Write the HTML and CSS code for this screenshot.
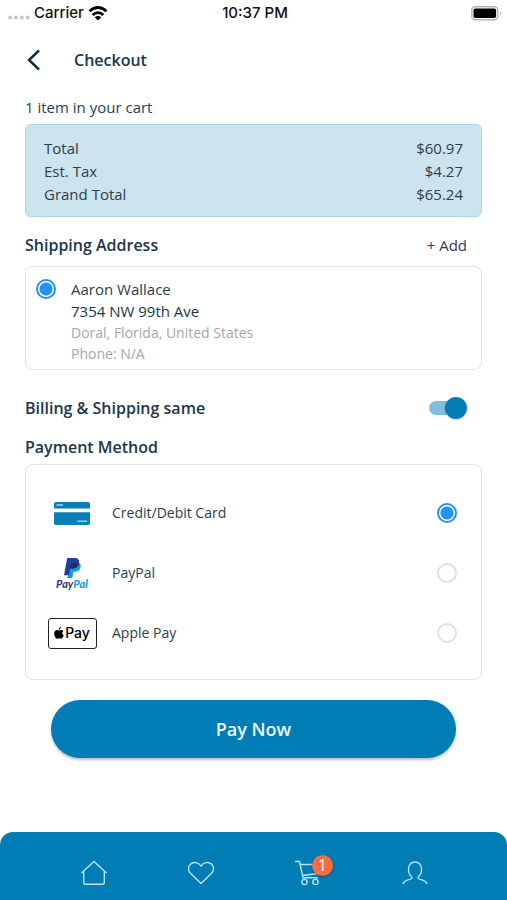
FILE: index.html
```html
<!DOCTYPE html>
<html lang="en">
<head>
<meta charset="utf-8">
<meta name="viewport" content="width=device-width, initial-scale=1">
<title>Checkout</title>
<link rel="stylesheet" href="styles.css">
</head>
<body>
<div class="status">
  <div class="carrier">
    <svg width="22" height="5" viewBox="0 0 22 5" fill="#c4c4c4"><circle cx="2" cy="2.5" r="1.9"/><circle cx="7.9" cy="2.5" r="1.9"/><circle cx="13.8" cy="2.5" r="1.9"/><circle cx="19.7" cy="2.5" r="1.9"/></svg>
    <span>Carrier</span>
    <svg width="20" height="15" viewBox="0 0 20 15" fill="none" stroke="#000" stroke-width="2.700"><path d="M1.500 5.300Q10-2.300 18.500 5.300"/><path d="M4.600 8.900Q10 4.200 15.400 8.900"/><path d="M10 14.500 6.700 11.200Q10 8.800 13.300 11.200Z" fill="#000" stroke="none"/></svg>
  </div>
  <time>10:37 PM</time>
  <div class="battery">
    <svg width="31" height="15" viewBox="0 0 31 15"><rect x=".8" y=".8" width="26" height="13" rx="3.500" fill="#fff" stroke="#b4b4b4" stroke-width="1.400"/><rect x="2.500" y="2.500" width="22.600" height="9.600" rx="1.800"/><path d="M29 5.300q2 2 0 4z" fill="#999"/></svg>
  </div>
</div>
<header class="topbar">
  <button class="back" type="button" aria-label="Back"><svg width="14" height="22" viewBox="0 0 14 22" fill="none" stroke="#142c40" stroke-width="2.500"><path d="M12 1.500 2 11l10 9.500"/></svg></button>
  <h1>Checkout</h1>
</header>
<main>
  <p class="count">1 item in your cart</p>
  <dl class="summary">
    <div><dt>Total</dt><dd>$60.97</dd></div>
    <div><dt>Est. Tax</dt><dd>$4.27</dd></div>
    <div><dt>Grand Total</dt><dd>$65.24</dd></div>
  </dl>
  <div class="heading-row shipping">
    <h2>Shipping Address</h2>
    <button class="add" type="button">+ Add</button>
  </div>
  <label class="address">
    <input class="radio" type="radio" name="address" checked>
    <span class="lines">
      <span>Aaron Wallace</span>
      <span class="street">7354 NW 99th Ave</span>
      <span class="muted">Doral, Florida, United States</span>
      <span class="muted">Phone: N/A</span>
    </span>
  </label>
  <label class="heading-row same">
    <span class="title">Billing &amp; Shipping same</span>
    <input class="switch" type="checkbox" role="switch" checked>
  </label>
  <h2 class="payment-title">Payment Method</h2>
  <div class="methods">
    <label class="method">
      <span class="logo"><svg width="36" height="23" viewBox="0 0 36 23"><rect width="36" height="23" rx="2" fill="#0a7fb4"/><path fill="#fff" d="M0 6.500h36v3.700H0z"/><path d="M2.500 3h6.500M23.500 19.200h9.500" stroke="#a5d4e9" stroke-width="1.600"/></svg></span>
      <span class="name">Credit/Debit Card</span>
      <input class="radio" type="radio" name="method" checked>
    </label>
    <label class="method">
      <span class="logo paypal">
        <svg width="17" height="20" viewBox="0 0 17 20"><path fill="#179bd7" d="M5.500 5h10c1.600 1.500 1.400 4 .5 6-1 2-2.800 2.700-5 2.700H9.400L8.300 20H3.500z"/><path fill="#1f3f9a" d="M3.200 0h7.400c3.600 0 5 2 4.400 5-.7 3.700-3.200 5.500-6.500 5.500H6.300L5 17.300H0z"/><path fill="#222d65" d="M7 5h8c-.7 3.700-3.200 5.500-6.500 5.500H6z"/></svg>
        <span class="wordmark">Pay<b>Pal</b></span>
      </span>
      <span class="name">PayPal</span>
      <input class="radio" type="radio" name="method">
    </label>
    <label class="method">
      <span class="logo"><span class="applepay"><svg width="10" height="12" viewBox="0 0 10 12"><path d="M6.900.1C7 1.500 6 2.700 4.800 2.700 4.700 1.400 5.700.3 6.900.1ZM9.400 4.200C7.700 5.300 8 7.500 9.800 8.300 9.300 9.800 8.200 11.700 7.100 11.700c-.8 0-1.200-.4-1.900-.4s-1.200.4-1.900.4C1.800 11.700.2 8.900.2 6.700.2 4.400 1.700 3.100 3.200 3.100c.9 0 1.500.5 2 .5.600 0 1.200-.5 2.200-.5.8 0 1.500.4 2 1.100Z"/></svg><span>Pay</span></span></span>
      <span class="name">Apple Pay</span>
      <input class="radio" type="radio" name="method">
    </label>
  </div>
  <button class="pay" type="button">Pay Now</button>
</main>
<nav class="tabs">
  <a href="#home" aria-label="Home"><svg width="28" height="28" viewBox="0 0 28 28"><path d="M1.500 14 14 2.500 26.500 14M3.700 12.500V23.500Q3.700 25.300 5.500 25.300H22.500Q24.300 25.300 24.300 23.500V12.500"/></svg></a>
  <a href="#saved" aria-label="Favorites"><svg width="28" height="28" viewBox="0 0 28 28"><path d="M14 24.500 3.700 14.600C.8 11.800.8 7.600 3.300 5.200 6.400 2.400 11.600 3 14 7.200 16.400 3 21.600 2.400 24.700 5.200 27.200 7.600 27.200 11.800 24.300 14.600Z" stroke-linejoin="round"/></svg></a>
  <a class="cart" href="#cart" aria-label="Cart, 1 item"><svg width="28" height="28" viewBox="0 0 28 28"><path d="M1 2.500H5.500L9 18.800H24M6.300 5.500H26L24 14.500 8.200 16.500"/><circle cx="10.500" cy="23" r="2.600"/><circle cx="21.500" cy="23" r="2.600"/></svg><span class="badge">1</span></a>
  <a href="#profile" aria-label="Profile"><svg width="28" height="28" viewBox="0 0 28 28"><path d="M2 25Q3 21.800 7 20.900C10.800 20 11.500 19 10.700 17.800 8.400 16 7.500 13 7.500 10.500 7.500 6 10 3 14 3s6.500 3 6.500 7.500C20.500 13 19.600 16 17.300 17.800 16.500 19 17.200 20 21 20.900Q25 21.800 26 25"/></svg></a>
</nav>
</body>
</html>
```
FILE: styles.css
```css
* { box-sizing: border-box; }
body {
  margin: 0;
  min-height: 100vh;
  display: flex;
  flex-direction: column;
  background: #fff;
  color: #2c3e4e;
  font: 500 15px/22px "Open Sans", sans-serif;
}
h1, h2, p, dl, dd { margin: 0; }
button { font: inherit; color: inherit; padding: 0; border: 0; background: none; }
svg { display: block; flex: none; }

.status {
  display: grid;
  grid-template-columns: 1fr auto 1fr;
  align-items: center;
  height: 26px;
  padding: 0 5px 0 8px;
  color: #111;
  font: 500 15px/26px Inter, sans-serif;
}
.carrier { display: flex; align-items: center; gap: 4px; }
.carrier svg:first-child { margin-top: 8px; }
.battery { justify-self: end; }

.topbar { display: flex; align-items: center; gap: 33px; height: 68px; padding: 0 27px; }
.back { width: 14px; }
h1, h2, .title { color: #20364a; font-size: 16px; font-weight: 600; line-height: 24px; }

main { padding: 0 25px; }
.count { line-height: 26px; margin-bottom: 4px; }
.summary {
  padding: 12px 18px 10px;
  border: 1px solid #a9d7e6;
  border-radius: 6px;
  background: #cce4ee;
  line-height: 23px;
}
.summary div { display: flex; justify-content: space-between; }
.heading-row { display: flex; align-items: center; justify-content: space-between; padding-right: 15px; }
.shipping { margin: 16px 0 9px; }
.address {
  display: flex;
  gap: 15px;
  padding: 11px 10px 5px;
  border: 1px solid #e2e2e2;
  border-radius: 8px;
}
.lines { display: flex; flex-direction: column; }
.street { color: #20364a; }
.muted { color: #a5a7a9; font-size: 14px; line-height: 21px; }

.radio {
  appearance: none;
  flex: none;
  width: 20px;
  height: 20px;
  margin: 0;
  border: 2px solid #e0e0e0;
  border-radius: 50%;
  background: #fff;
}
.radio:checked { border-color: #2592ed; background: radial-gradient(circle, #2592ed 6px, #fff 7px); }
.address .radio { margin-top: 1px; }

.same { margin: 26px 0 15px; }
.switch {
  appearance: none;
  position: relative;
  width: 38px;
  height: 22px;
  margin: 0;
}
.switch::before {
  content: "";
  position: absolute;
  inset: 4px 4px 4px 0;
  border-radius: 8px;
  background: #80bedb;
}
.switch::after {
  content: "";
  position: absolute;
  top: 0;
  right: 0;
  width: 22px;
  height: 22px;
  border-radius: 50%;
  background: #047db5;
  box-shadow: 0 1px 2px #0003;
}

.payment-title { margin-bottom: 5px; }
.methods { padding: 18px 24px 16px 21px; border: 1px solid #e2e2e2; border-radius: 8px; }
.method { display: flex; align-items: center; height: 60px; }
.logo { display: flex; flex-direction: column; align-items: center; width: 50px; margin-right: 15px; }
.name { flex: 1; font-size: 14px; }
.wordmark { color: #1f3478; font: italic 700 11px/11px Lato, sans-serif; }
.wordmark b { color: #249bd5; }
.applepay {
  display: flex;
  align-items: center;
  justify-content: center;
  gap: 1px;
  width: 49px;
  height: 31px;
  border: 1px solid #222;
  border-radius: 3px;
  color: #000;
  font: 500 14px/28px Inter, sans-serif;
}
.pay {
  display: block;
  width: calc(100% - 52px);
  height: 58px;
  margin: 20px auto;
  border-radius: 29px;
  background: #007db5;
  box-shadow: 0 2px 3px #0004;
  color: #eef9ff;
  font-size: 18px;
  font-weight: 600;
}

.tabs {
  display: flex;
  justify-content: space-around;
  align-items: center;
  height: 68px;
  margin-top: auto;
  padding: 13px 39px 0 41px;
  border-radius: 13px 13px 0 0;
  background: #007db5;
}
.tabs a { position: relative; }
.tabs svg { fill: none; stroke: #b9e4f6; stroke-width: 1.4; }
.badge {
  position: absolute;
  top: -4px;
  right: -11px;
  width: 21px;
  height: 21px;
  border-radius: 50%;
  background: #f96b43;
  box-shadow: 0 1px 3px #0005;
  color: #fff;
  font: 500 16px/21px "Open Sans", sans-serif;
  text-align: center;
}
```
